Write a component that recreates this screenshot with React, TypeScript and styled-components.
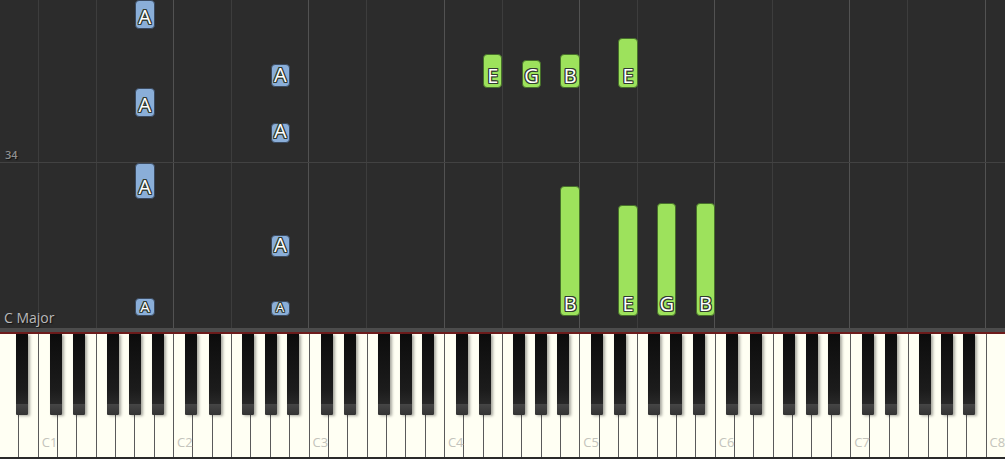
import React from "react";
import styled, { createGlobalStyle } from "styled-components";

const WHITE_COUNT = 52;
const KEY_W = 100 / WHITE_COUNT;

type Note = { key: number; top: number; bottom: number; name: string; hand: "left" | "right" };

const notes: Note[] = [
  { key: 7, top: 0, bottom: 29, name: "A", hand: "left" },
  { key: 7, top: 88, bottom: 117, name: "A", hand: "left" },
  { key: 7, top: 163, bottom: 199, name: "A", hand: "left" },
  { key: 7, top: 298, bottom: 316, name: "A", hand: "left" },
  { key: 14, top: 64, bottom: 87, name: "A", hand: "left" },
  { key: 14, top: 123, bottom: 143, name: "A", hand: "left" },
  { key: 14, top: 235, bottom: 257, name: "A", hand: "left" },
  { key: 14, top: 301, bottom: 316, name: "A", hand: "left" },
  { key: 25, top: 54, bottom: 88, name: "E", hand: "right" },
  { key: 27, top: 60, bottom: 88, name: "G", hand: "right" },
  { key: 29, top: 54, bottom: 88, name: "B", hand: "right" },
  { key: 32, top: 38, bottom: 88, name: "E", hand: "right" },
  { key: 29, top: 186, bottom: 316, name: "B", hand: "right" },
  { key: 32, top: 205, bottom: 316, name: "E", hand: "right" },
  { key: 34, top: 203, bottom: 316, name: "G", hand: "right" },
  { key: 36, top: 203, bottom: 316, name: "B", hand: "right" },
];

// white key indexes of the C and F keys
const cKeys = [2, 9, 16, 23, 30, 37, 44, 51];
const fKeys = [5, 12, 19, 26, 33, 40, 47];

// black keys: boundary (white index to the right) and pixel offset of the centre
const blackKeys: { edge: number; shift: number }[] = [{ edge: 1, shift: 3 }];
for (let o = 0; o < 7; o++) {
  const c = 2 + o * 7;
  blackKeys.push(
    { edge: c + 1, shift: -2 },
    { edge: c + 2, shift: 2 },
    { edge: c + 4, shift: -3 },
    { edge: c + 5, shift: 0 },
    { edge: c + 6, shift: 3 }
  );
}

export default function App() {
  return (
    <>
      <GlobalStyle />
      <Screen>
        <Roll>
          {fKeys.map((k) => (
            <GridLine key={"f" + k} $major={false} style={{ left: `${k * KEY_W}%` }} />
          ))}
          {cKeys.map((k) => (
            <GridLine key={"c" + k} $major={k !== 2} style={{ left: `${k * KEY_W}%` }} />
          ))}
          <MeasureLine />
          <MeasureNumber>34</MeasureNumber>
          {notes.map((n, i) => {
            const h = n.bottom - n.top;
            return (
              <NoteBlock
                key={i}
                $hand={n.hand}
                style={{
                  left: `${n.key * KEY_W}%`,
                  width: `${KEY_W}%`,
                  top: n.top,
                  height: h,
                }}
              >
                <NoteName $size={h < 17 ? 13 : h < 20 ? 15 : 20}>{n.name}</NoteName>
              </NoteBlock>
            );
          })}
          <KeyName>C Major</KeyName>
        </Roll>
        <Divider />
        <RedLine />
        <Keyboard>
          {Array.from({ length: WHITE_COUNT }).map((_, i) => {
            const c = cKeys.indexOf(i);
            return (
              <WhiteKey key={i} $last={i === WHITE_COUNT - 1}>
                {c >= 0 && <OctaveLabel>C{c + 1}</OctaveLabel>}
              </WhiteKey>
            );
          })}
          {blackKeys.map((b, i) => (
            <BlackKey key={i} style={{ left: `calc(${b.edge * KEY_W}% + ${b.shift - 6}px)` }} />
          ))}
        </Keyboard>
      </Screen>
    </>
  );
}

const GlobalStyle = createGlobalStyle`
  html, body {
    margin: 0;
    padding: 0;
    background: #2c2c2c;
    overflow: hidden;
  }
  * {
    box-sizing: border-box;
  }
`;

const Screen = styled.div`
  width: 100vw;
  height: 459px;
  display: flex;
  flex-direction: column;
  font-family: "Open Sans", "Noto Sans", sans-serif;
`;

const Roll = styled.div`
  position: relative;
  height: 328px;
  background: #2c2c2c;
  overflow: hidden;
`;

const GridLine = styled.div<{ $major: boolean }>`
  position: absolute;
  top: 0;
  bottom: 0;
  width: 1px;
  margin-left: -1px;
  background: ${(p) => (p.$major ? "#525252" : "#3d3d3d")};
`;

const MeasureLine = styled.div`
  position: absolute;
  left: 0;
  right: 0;
  top: 162px;
  height: 1px;
  background: #424242;
`;

const MeasureNumber = styled.span`
  position: absolute;
  left: 5px;
  top: 147px;
  font-size: 11px;
  font-weight: 600;
  color: #8f8f8f;
  text-shadow: 1px 1px 1px #111;
`;

const KeyName = styled.span`
  position: absolute;
  left: 4px;
  bottom: 1px;
  font-size: 14px;
  color: #b9b9b9;
  text-shadow: 1px 1px 1px #151515;
`;

const NoteBlock = styled.div<{ $hand: "left" | "right" }>`
  position: absolute;
  display: flex;
  flex-direction: column;
  justify-content: flex-end;
  align-items: center;
  padding-bottom: 1px;
  border-radius: 4px;
  border: 1px solid ${(p) => (p.$hand === "left" ? "#3a4a60" : "#46702a")};
  background: ${(p) => (p.$hand === "left" ? "#8aaed8" : "#9de25c")};
`;

const NoteName = styled.span<{ $size: number }>`
  font-size: ${(p) => p.$size}px;
  line-height: 1;
  color: #ffffff;
  text-shadow:
    1px 0 0 #2f3a2f,
    -1px 0 0 #2f3a2f,
    0 1px 0 #2f3a2f,
    0 -1px 0 #2f3a2f,
    1px 1px 0 #2f3a2f,
    -1px -1px 0 #2f3a2f,
    1px -1px 0 #2f3a2f,
    -1px 1px 0 #2f3a2f;
`;

const Divider = styled.div`
  height: 4px;
  background: #4c4c4c;
`;

const RedLine = styled.div`
  height: 2px;
  background: #6e1c1c;
`;

const Keyboard = styled.div`
  position: relative;
  flex: 1;
  display: flex;
  background: #2a2a2a;
  border-bottom: 2px solid #2a2a2a;
`;

const WhiteKey = styled.div<{ $last: boolean }>`
  position: relative;
  flex: 1;
  background: #fffff3;
  border-right: ${(p) => (p.$last ? "none" : "1px solid #5a5a5a")};
`;

const OctaveLabel = styled.span`
  position: absolute;
  left: 3px;
  bottom: 6px;
  font-size: 13px;
  color: #c4c4bc;
`;

const BlackKey = styled.div`
  position: absolute;
  top: 0;
  width: 12px;
  height: 81px;
  border-radius: 0 0 1px 1px;
  background: linear-gradient(180deg, #0c0c0c 0%, #1c1c1c 70%, #282828 86%, #454545 87%, #333333 100%);
  box-shadow: 2px 1px 3px rgba(0, 0, 0, 0.35);
`;
